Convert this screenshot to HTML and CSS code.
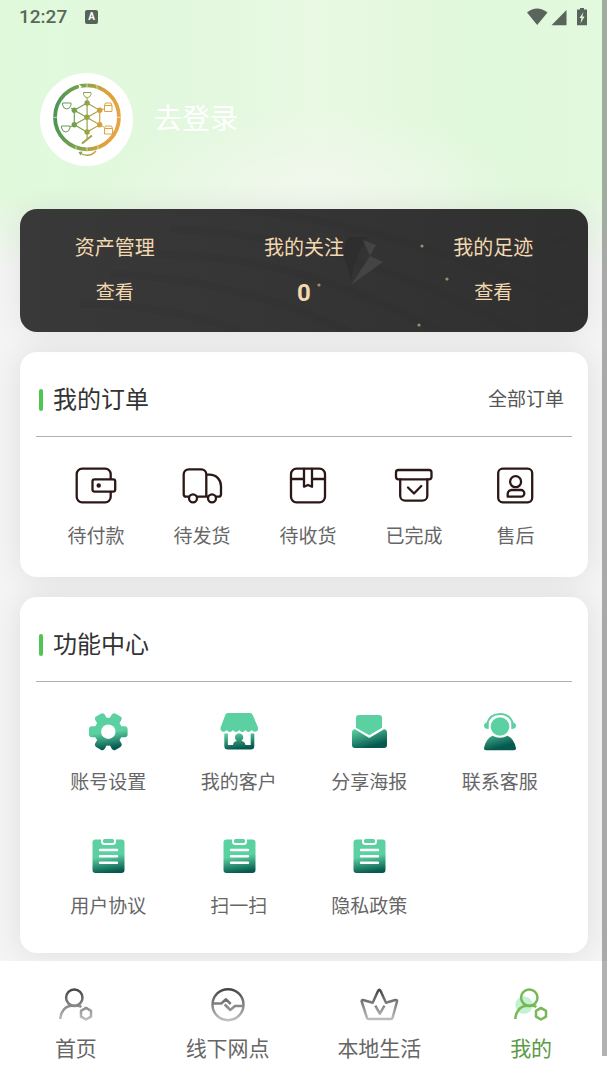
FILE: index.html
```html
<!DOCTYPE html>
<html lang="zh-CN">
<head>
  <meta charset="UTF-8">
  <meta name="viewport" content="width=device-width, initial-scale=1.0">
  <title>我的</title>
  <link rel="stylesheet" href="styles.css">
</head>
<body>
<!-- shared gradients and icons -->
<svg class="defs" width="0" height="0" aria-hidden="true">
  <defs>
    <linearGradient id="green" gradientUnits="userSpaceOnUse" x1="20" y1="4" x2="25" y2="40">
      <stop offset="0.5" stop-color="#5bd0a0"/>
      <stop offset="0.95" stop-color="#06594f"/>
    </linearGradient>
    <linearGradient id="greenLow" gradientUnits="userSpaceOnUse" x1="18" y1="19" x2="24" y2="40">
      <stop offset="0" stop-color="#52c598"/>
      <stop offset="0.85" stop-color="#06594f"/>
    </linearGradient>
    <linearGradient id="grey" gradientUnits="userSpaceOnUse" x1="0" y1="6" x2="0" y2="38">
      <stop offset="0" stop-color="#444"/>
      <stop offset="1" stop-color="#c4c4c4"/>
    </linearGradient>
    <linearGradient id="ring" gradientUnits="userSpaceOnUse" x1="14" y1="40" x2="80" y2="46">
      <stop offset="0" stop-color="#4b9556"/>
      <stop offset="0.45" stop-color="#86a44a"/>
      <stop offset="0.75" stop-color="#dda13b"/>
      <stop offset="1" stop-color="#e6a543"/>
    </linearGradient>
    <symbol id="clipboard" viewBox="0 0 44 44">
      <rect x="6.500" y="5.500" width="32" height="33.500" rx="3" fill="url(#green)"/>
      <rect x="16" y="4" width="13" height="6" rx="2.500" fill="#5bd0a0" stroke="#fff" stroke-width="2"/>
      <path d="M14 16h17M14 22.300h17M14 28.700h17" stroke="#fff" stroke-width="2.400" stroke-linecap="round"/>
    </symbol>
    <symbol id="user" viewBox="0 0 44 44">
      <circle cx="20.300" cy="14.700" r="8.200"/>
      <path d="M6.300 36C6.500 29 11 23 18 22.800H23C25 22.800 26.500 23.200 27.300 24"/>
      <path d="M32 24.900l5 2.900v5.800l-5 2.900-5-2.900v-5.800z"/>
    </symbol>
  </defs>
</svg>

<div class="page">
  <div class="hero">
    <div class="status">
      <span class="time">12:27</span>
      <span class="app-mark">A</span>
      <svg class="signals" width="62" height="20" viewBox="0 0 62 20">
        <path d="M1 5.500Q11 -2.500 21.500 5.500L11.200 18z"/>
        <path d="M25.500 18.200L40.500 3V18.200z"/>
        <path d="M51 2.500h3V1h4v1.500h3v15.700H51z"/>
        <path d="M57.500 5l-4 6h2l-1 5.500 4-7h-2.200z" fill="#e1f7dc"/>
      </svg>
    </div>
    <div class="profile">
      <svg class="avatar" width="93" height="93" viewBox="0 0 93 93">
        <g fill="none" stroke="url(#ring)">
          <circle cx="47" cy="44.300" r="32" stroke-width="3.800"/>
          <path stroke-width="1.200" d="M47.100 29.800V66M34.300 37.300L59.700 51.700M59.700 37.300L34.300 51.700M34.300 37.300L47 30L59.700 37.300V51.700L47 59L34.300 51.700z"/>
          <path stroke-width="2" d="M42 70.500L52 62.500"/>
          <path stroke-width="1" d="M43.500 19.500h7.500v2q-1 3.200-3.700 3.200t-3.700-3.200zM47.100 25v4M22.500 30h8.500v2q-1 4-4.200 4t-4.200-4zM31 35l3 2M21.500 53h8.500v2q-1 4-4.200 4t-4.200-4zM30 54l4-2M64.500 32.500h7.500v6h-7.500zM64.500 32.500l1-2.500h5.500l1 2.500M60 37l4-1M64.500 55.500h8v5.500h-8zM64.500 55.500l1-2.500h6l1 2.500M60 52l4 2"/>
          <path stroke-width="1.400" d="M40 80Q49 85.500 56 78"/>
        </g>
        <g fill="url(#ring)">
          <circle cx="47" cy="44.300" r="2.700"/><circle cx="47.100" cy="30" r="2.700"/>
          <circle cx="47.100" cy="59" r="2.700"/><circle cx="34.300" cy="37.300" r="2.700"/>
          <circle cx="34.300" cy="51.700" r="2.700"/><circle cx="59.700" cy="37.300" r="2.700"/>
          <circle cx="59.700" cy="51.700" r="2.700"/><path d="M38.500 79l4-.5-2 4z"/>
        </g>
        <path d="M47 10.500v3.800M47 74.500v3.800M13 44.300h4M77 44.300h4M57 12v4M36 73v4M58 73v4" stroke="#fff" stroke-width=".6"/>
        <path d="M37.500 10l4.500 3.800-4 3 1.200-3z" fill="#fff"/>
      </svg>
      <a class="login" href="#">去登录</a>
    </div>
  </div>

  <main>
    <section class="assets">
      <svg class="assets-art" viewBox="0 0 568 123" preserveAspectRatio="none" aria-hidden="true">
        <g fill="none" stroke="#2d2d2d" stroke-width="7" opacity=".2">
          <path d="M150 20Q320 25 500 123M130 45Q280 45 420 123M90 65Q220 70 330 123M60 95Q150 95 220 123M220 0Q400 20 568 105M568 25Q500 38 450 60"/>
        </g>
        <path d="M328 28L323 42L331 72Q334 50 348 28z" fill="#2e2e2e"/>
        <path d="M343 31l13 5-6 11z" fill="#444"/>
        <path d="M350 47l13 6-32 23z" fill="#444"/>
        <g fill="#a58c70">
          <circle cx="402" cy="37" r="1.600"/><circle cx="427" cy="70" r="1.600"/>
          <circle cx="399" cy="116" r="1.600"/><circle cx="299" cy="76" r="1.600"/>
        </g>
      </svg>
      <a class="asset" href="#"><span class="asset-name">资产管理</span><span class="asset-link">查看</span></a>
      <a class="asset" href="#"><span class="asset-name">我的关注</span><strong class="asset-count">0</strong></a>
      <a class="asset" href="#"><span class="asset-name">我的足迹</span><span class="asset-link">查看</span></a>
    </section>

    <section class="card">
      <div class="card-head">
        <h2>我的订单</h2>
        <a class="more" href="#">全部订单</a>
      </div>
      <div class="orders">
        <a class="item" href="#">
          <svg class="icon line" viewBox="0 0 44 44">
            <path d="M36.700 15V10.200a5.500 5.500 0 0 0-5.500-5.500H8.200a5.500 5.500 0 0 0-5.500 5.500v22.600a5.500 5.500 0 0 0 5.500 5.500h23a5.500 5.500 0 0 0 5.500-5.500V28"/>
            <rect x="18.500" y="15.300" width="22.700" height="12.300" rx="2"/>
            <circle cx="24.700" cy="21.600" r="1.100" fill="#2b1816"/>
          </svg>
          <span>待付款</span>
        </a>
        <a class="item" href="#">
          <svg class="icon line" viewBox="0 0 44 44">
            <path d="M9 32.700H6.200a2.500 2.500 0 0 1-2.500-2.500V10.300a5 5 0 0 1 5-5h12.600a5 5 0 0 1 5 5v22.400H17M26.300 10.700h3.200C36.500 10.700 41 16 41 22v8.200a2.500 2.500 0 0 1-2.500 2.500H36M26.300 32.700H28"/>
            <circle cx="13" cy="34.300" r="4"/><circle cx="32" cy="34.300" r="4"/>
          </svg>
          <span>待发货</span>
        </a>
        <a class="item" href="#">
          <svg class="icon line" viewBox="0 0 44 44">
            <rect x="5" y="4.700" width="34" height="33.600" rx="5.500"/>
            <path d="M5 15h13M26 15h13M18 5v17.700l4-1.700 4 1.700V5"/>
          </svg>
          <span>待收货</span>
        </a>
        <a class="item" href="#">
          <svg class="icon line" viewBox="0 0 44 44">
            <rect x="4" y="6" width="35.500" height="9.300" rx="2.500"/>
            <path d="M8.200 15.500v16.200a5 5 0 0 0 5 5h17.100a5 5 0 0 0 5-5V15.500M16 23.500l6 6 7.300-7.500"/>
          </svg>
          <span>已完成</span>
        </a>
        <a class="item" href="#">
          <svg class="icon line" viewBox="0 0 44 44">
            <rect x="5.200" y="4.700" width="34" height="33.600" rx="4.500"/>
            <circle cx="22.600" cy="17.700" r="5.500"/>
            <path d="M14.700 32.700V30a4 4 0 0 1 4-4H28a3.300 3.300 0 0 1 0 6.700z"/>
          </svg>
          <span>售后</span>
        </a>
      </div>
    </section>

    <section class="card">
      <div class="card-head">
        <h2>功能中心</h2>
      </div>
      <div class="tools">
        <a class="item" href="#">
          <svg class="icon" viewBox="0 0 44 44">
            <mask id="gear">
              <g fill="#fff">
                <circle cx="22.300" cy="21.700" r="14"/>
                <rect x="3" y="16.200" width="38.600" height="11" rx="3"/>
                <rect x="3" y="16.200" width="38.600" height="11" rx="3" transform="rotate(60 22.300 21.700)"/>
                <rect x="3" y="16.200" width="38.600" height="11" rx="3" transform="rotate(120 22.300 21.700)"/>
              </g>
              <circle cx="22.300" cy="21.700" r="7.200"/>
            </mask>
            <rect width="44" height="44" fill="url(#green)" mask="url(#gear)"/>
          </svg>
          <span>账号设置</span>
        </a>
        <a class="item" href="#">
          <svg class="icon" viewBox="0 0 44 44">
            <path fill="#5bd0a0" d="M11 3h22q2 0 2.700 2l5.300 12.500q.5 4-3.200 4.300-2 0-3.100-1.800-1.300 2-3.200 2t-3.100-2q-1.200 2-3.100 2t-3.100-2q-1.200 2-3.100 2t-3.100-2q-1.200 2-3.100 2t-3.200-2q-1.300 2-3.100 1.800-3.600-.5-3-4.300L8.300 5Q9 3 11 3z"/>
            <path fill="url(#green)" d="M7.300 23.500h3.600V35H16q.5-3.800 4-4a4.200 4.200 0 1 1 4.200 0q3.800.3 4.200 4h5.300V23.500h3.600V36q0 3.500-3.500 3.500H10.800Q7.300 39.500 7.300 36z"/>
          </svg>
          <span>我的客户</span>
        </a>
        <a class="item" href="#">
          <svg class="icon" viewBox="0 0 44 44">
            <path fill="#5bd0a0" d="M12 5h20q3 0 3 3v9.700L22.300 25.200 9 17.700V8q0-3 3-3z"/>
            <path fill="url(#greenLow)" d="M8 19.200L22.300 28 37 19.200q3 .2 3 3.300V35q0 3-3 3H8q-3 0-3-3V22.500q0-3 3-3.300z"/>
          </svg>
          <span>分享海报</span>
        </a>
        <a class="item" href="#">
          <svg class="icon" viewBox="0 0 44 44">
            <circle cx="22" cy="16.500" r="9.300" fill="#5bd0a0"/>
            <path d="M9 14C11 6.500 16 4 22 4s11 2.500 13 10" fill="none" stroke="#5bd0a0" stroke-width="1.800"/>
            <path fill="#5bd0a0" d="M10.700 12.300v6.700Q6 19 6 15.700t4.700-3.400zM33.300 12.300v6.700Q38 19 38 15.700t-4.700-3.400z"/>
            <path fill="url(#greenLow)" d="M14.500 25.700Q22 30 29.500 25.700 36 28.500 38 38q.3 2.300-2 2.300H8Q5.700 40.300 6 38 8 28.500 14.500 25.700z"/>
          </svg>
          <span>联系客服</span>
        </a>
        <a class="item" href="#">
          <svg class="icon"><use href="#clipboard"/></svg>
          <span>用户协议</span>
        </a>
        <a class="item" href="#">
          <svg class="icon"><use href="#clipboard"/></svg>
          <span>扫一扫</span>
        </a>
        <a class="item" href="#">
          <svg class="icon"><use href="#clipboard"/></svg>
          <span>隐私政策</span>
        </a>
      </div>
    </section>
  </main>

  <nav class="tabbar">
    <a class="tab" href="#">
      <svg class="icon tab-line"><use href="#user"/></svg>
      <span>首页</span>
    </a>
    <a class="tab" href="#">
      <svg class="icon tab-line" viewBox="0 0 44 44">
        <circle cx="22" cy="21.700" r="15.500"/>
        <path d="M6 20.500h9.300l4.700-4.200 4.700 4.700M18.700 21.500l5.600 5.500 4.700-4h9"/>
      </svg>
      <span>线下网点</span>
    </a>
    <a class="tab" href="#">
      <svg class="icon tab-line" viewBox="0 0 44 44">
        <path d="M6 17l9.700 2.700L21 8q1.300-2.500 2.600 0L29 19.700l9.300-2.700q2-.2 1.700 1.500L35.500 35q-.4 1-1.500 1H11.500q-1.100 0-1.500-1L4.700 18.500Q4.500 17 6 17zM18.300 22.700l4.500 8 4.700-8"/>
      </svg>
      <span>本地生活</span>
    </a>
    <a class="tab active" href="#">
      <svg class="icon tab-line" viewBox="0 0 44 44">
        <circle class="blob" cx="15" cy="22" r="8.700"/>
        <use href="#user"/>
      </svg>
      <span>我的</span>
    </a>
  </nav>
</div>
<div class="scroll-thumb"></div>
</body>
</html>
```

FILE: styles.css
```css
* {
  box-sizing: border-box;
}

body {
  margin: 0;
  background-color: #f4f4f4;
  color: #666;
  font-family: Roboto, "Noto Sans CJK SC", sans-serif;
  font-size: 19px;
  line-height: 28px;
}

a {
  color: inherit;
  text-decoration: none;
}

svg {
  display: block;
}

.defs {
  position: absolute;
}

.page {
  display: flex;
  flex-direction: column;
  min-height: 100vh;
  background:
    linear-gradient(to bottom, rgba(244, 244, 244, 0) 190px, #f4f4f4 272px) no-repeat,
    radial-gradient(ellipse 220px 80px at 52% 190px, #f0f7ec, rgba(240, 247, 236, 0)) no-repeat,
    linear-gradient(to right, #e0f9db, #e3f8df 35%, #e9f9e3 52%, #e0f8db 80%, #e3f9df);
}

/* header */
.status {
  display: flex;
  align-items: center;
  height: 34px;
  padding: 0 19px;
}

.time {
  color: #59685a;
  font-size: 19px;
  font-weight: 500;
}

.app-mark {
  width: 13px;
  height: 14px;
  margin-left: 18px;
  border-radius: 2px;
  background-color: #56655a;
  color: #fff;
  font-size: 10px;
  font-weight: bold;
  line-height: 14px;
  text-align: center;
}

.signals {
  margin-left: auto;
  fill: #59655a;
}

.profile {
  display: flex;
  align-items: center;
  gap: 21px;
  padding: 39px 40px 43px;
}

.avatar {
  border-radius: 50%;
  background-color: #fff;
}

.login {
  color: #fff;
  font-size: 28px;
  line-height: 40px;
}

/* cards */
main {
  display: flex;
  flex-direction: column;
  flex: 1;
  gap: 20px;
  padding: 0 19px 8px 20px;
}

.assets {
  position: relative;
  display: grid;
  grid-template-columns: repeat(3, 1fr);
  padding: 25px 0;
  border-radius: 17px;
  background: linear-gradient(to right, #393939, #303030);
  box-shadow: 0 0 30px rgba(0, 0, 0, 0.07);
  color: #f3d8b0;
  overflow: hidden;
}

.assets-art {
  position: absolute;
  inset: 0;
  width: 100%;
  height: 100%;
}

.asset {
  position: relative;
  display: flex;
  flex-direction: column;
  align-items: center;
  gap: 17px;
}

.asset-name {
  font-size: 20px;
}

.asset-count {
  font-size: 24px;
}

.card {
  border-radius: 17px;
  background-color: #fff;
  box-shadow: 0 0 30px rgba(0, 0, 0, 0.09);
}

.card-head {
  display: flex;
  justify-content: space-between;
  align-items: center;
  margin: 0 16px;
  padding: 30px 8px 18px 3px;
  border-bottom: 1px solid #b0b0b0;
}

h2 {
  display: flex;
  align-items: center;
  gap: 10px;
  margin: 0;
  color: #333;
  font-size: 24px;
  font-weight: normal;
  line-height: 36px;
}

h2::before {
  content: "";
  width: 4px;
  height: 22px;
  border-radius: 2px;
  background-color: #50c455;
}

.more {
  color: #555;
}

.orders {
  display: flex;
  justify-content: space-around;
  padding: 27px 24px 26px 23px;
}

.tools {
  display: grid;
  grid-template-columns: repeat(4, 1fr);
  row-gap: 37px;
  padding: 28px 23px 32px;
}

.item {
  display: flex;
  flex-direction: column;
  align-items: center;
  gap: 15px;
  min-width: 48px;
}

.icon {
  width: 44px;
  height: 44px;
}

.line {
  fill: none;
  stroke: #2b1816;
  stroke-width: 2.3;
  stroke-linecap: round;
  stroke-linejoin: round;
}

/* bottom tabs */
.tabbar {
  position: sticky;
  bottom: 0;
  display: grid;
  grid-template-columns: repeat(4, 1fr);
  padding: 22px 0 17px;
  background-color: #fff;
}

.tab {
  display: flex;
  flex-direction: column;
  align-items: center;
  gap: 8px;
  font-size: 21px;
}

.tab-line {
  fill: none;
  stroke: url(#grey);
  stroke-width: 2.5;
  stroke-linejoin: round;
}

.tab.active {
  color: #5b9a48;
}

.active .tab-line {
  stroke: #77b956;
}

.blob {
  fill: #c2f2d0;
  stroke: none;
}

.scroll-thumb {
  position: fixed;
  top: 0;
  right: 0;
  bottom: 24px;
  width: 5px;
  background-color: rgba(0, 0, 0, 0.3);
}
```
